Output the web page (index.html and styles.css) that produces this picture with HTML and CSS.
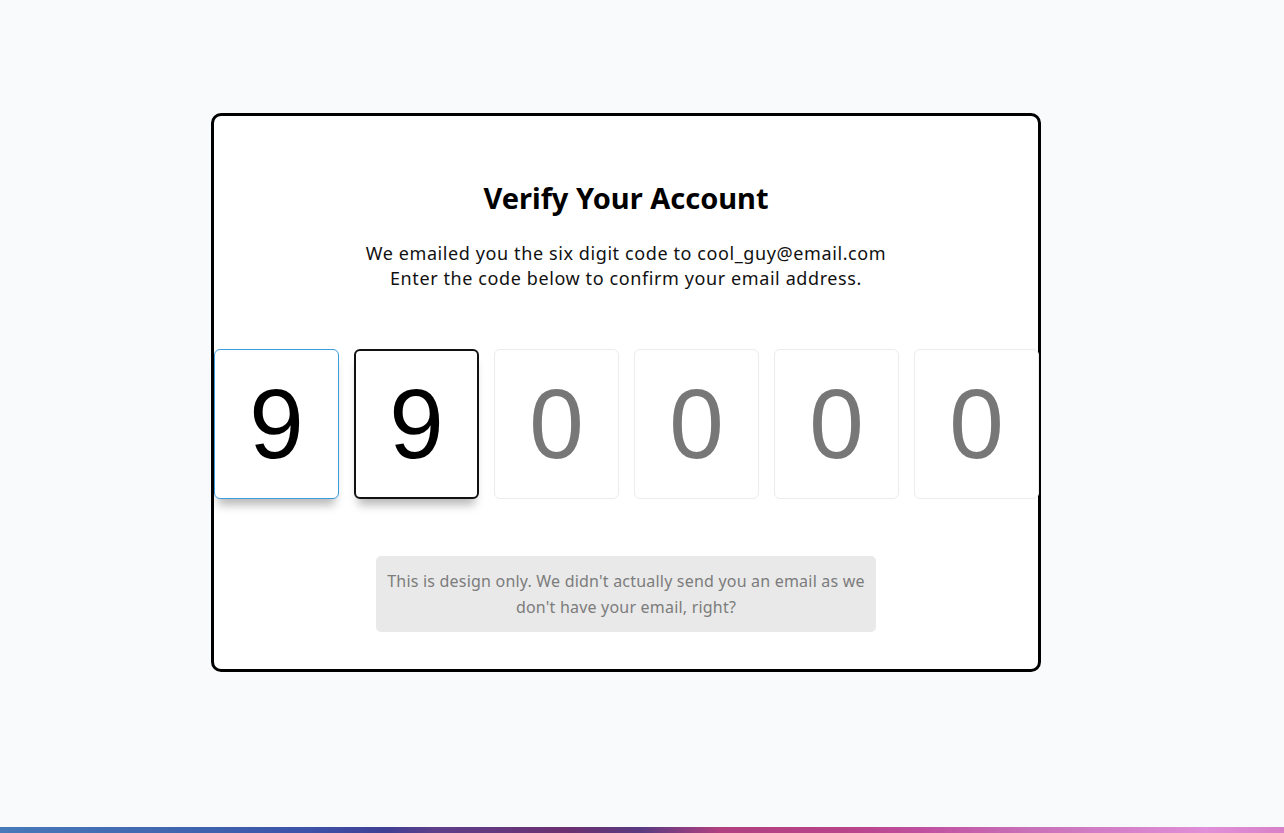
FILE: index.html
```html
<!DOCTYPE html>
<html lang="en">
<head>
<meta charset="utf-8">
<title>Verify Your Account</title>
<link rel="stylesheet" href="styles.css">
</head>
<body>
<main class="page">
  <section class="card">
    <h1 class="title">Verify Your Account</h1>
    <p class="lead">We emailed you the six digit code to cool_guy@email.com<br>Enter the code below to confirm your email address.</p>
    <div class="code">
      <input class="digit digit-focus" type="text" value="9" maxlength="1">
      <input class="digit digit-filled" type="text" value="9" maxlength="1">
      <input class="digit" type="text" placeholder="0" maxlength="1">
      <input class="digit" type="text" placeholder="0" maxlength="1">
      <input class="digit" type="text" placeholder="0" maxlength="1">
      <input class="digit" type="text" placeholder="0" maxlength="1">
    </div>
    <p class="note">This is design only. We didn't actually send you an email as we don't have your email, right?</p>
  </section>
</main>
<div class="bar"></div>
</body>
</html>
```
FILE: styles.css
```css
* { box-sizing: border-box; }
html, body { height: 100%; }
body {
  margin: 0;
  background: #f9fafc;
  font-family: "Noto Sans", "Open Sans", sans-serif;
  display: flex;
  flex-direction: column;
}
.page {
  flex: 1;
  display: flex;
  justify-content: center;
  align-items: flex-start;
  padding: 113px 32px 0 0;
}
.card {
  width: 830px;
  background: #fff;
  border: 3px solid #000;
  border-radius: 10px;
  padding: 64px 0 37px;
  display: flex;
  flex-direction: column;
  align-items: center;
  text-align: center;
}
.title {
  margin: 0;
  font-size: 29px;
  line-height: 36px;
  font-weight: 700;
  color: #000;
}
.lead {
  margin: 25px 0 0;
  font-size: 18px;
  line-height: 25px;
  letter-spacing: 0.6px;
  color: #111;
}
.code {
  margin-top: 58px;
  display: flex;
  gap: 15px;
  width: 100%;
}
.digit {
  width: 125px;
  height: 150px;
  border: 1px solid #ececec;
  border-radius: 6px;
  background: #fff;
  font-family: "Liberation Sans", Arial, sans-serif;
  font-size: 98px;
  text-align: center;
  color: #000;
  padding: 0;
  outline: none;
}
.digit::placeholder { color: #777; opacity: 1; }
.digit-focus {
  border-color: #3d9be0;
  box-shadow: 0 10px 10px -4px rgba(0,0,0,0.28);
}
.digit-filled {
  border: 2px solid #111;
  box-shadow: 0 10px 10px -4px rgba(0,0,0,0.28);
}
.note {
  margin: 57px 0 0;
  width: 500px;
  background: #e9e9e9;
  border-radius: 5px;
  padding: 12px 10px;
  font-size: 16px;
  line-height: 26px;
  letter-spacing: 0.2px;
  color: #7c7c7c;
}
.bar {
  height: 6px;
  flex: none;
  background: linear-gradient(90deg, #4879b9 0%, #3f62ae 16%, #3d52a8 24%, #3f3f94 30%, #5e3f8a 34%, #6b3070 44%, #5a3a80 50%, #b04080 56%, #b8448a 66%, #c050a0 72%, #c870b8 80%, #e090d8 94%, #d880c8 100%);
}
```
